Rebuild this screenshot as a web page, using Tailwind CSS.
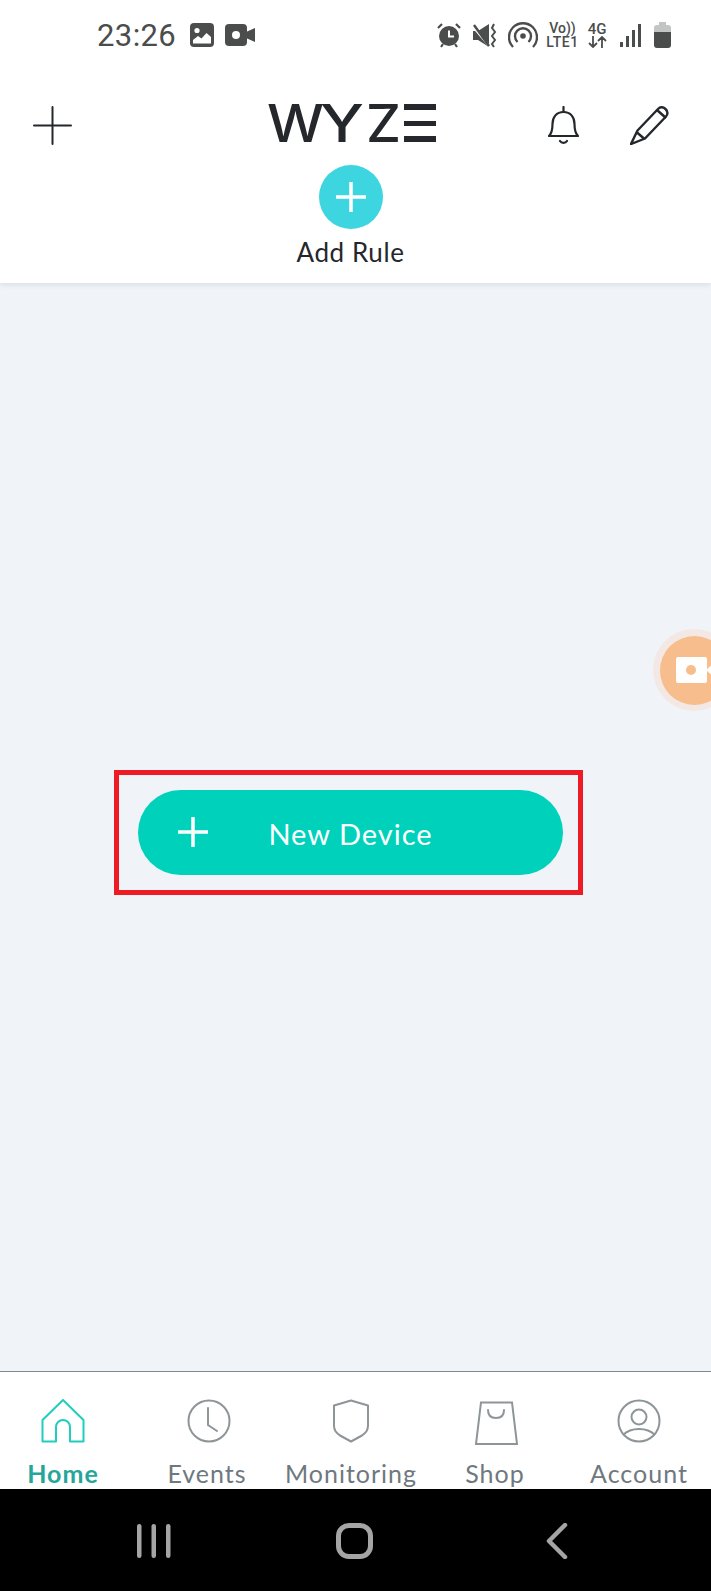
<!DOCTYPE html>
<html lang="en">

<head>
    <meta charset="UTF-8" />
    <meta name="viewport" content="width=device-width, initial-scale=1.0" />
    <title>Wyze - Add New Device</title>
    <script src="https://cdn.jsdelivr.net/npm/@tailwindcss/browser@4"></script>
</head>

<body class="bg-white font-[Lato,sans-serif]">
    <div class="relative flex flex-col w-[711px] h-[1591px] overflow-hidden">
        <!-- header -->
        <header class="relative z-10 h-[283px] shrink-0 bg-white shadow-[0_2px_5px_rgba(120,135,150,0.18)]">
            <!-- status bar -->
            <div class="flex items-center justify-between h-[70px] pl-[97px] pr-[40px] text-[#4b4d4c]">
                <div class="flex items-center">
                    <span class="font-[Roboto,sans-serif] text-[31px] tracking-[0.4px] leading-none mr-[14px]">23:26</span>
                    <svg class="w-[24px] h-[24px] mr-[11px]" viewBox="0 0 24 24">
                        <rect width="24" height="24" rx="4" fill="#4b4d4c" />
                        <circle cx="7" cy="7.500" r="2.600" fill="#fff" />
                        <path d="M3 20.500v-3.500l5-4 3.500 2.500 5-5.500 4.500 4v6.500z" fill="#fff" />
                    </svg>
                    <svg class="w-[30px] h-[22px]" viewBox="0 0 30 22">
                        <rect width="22" height="22" rx="4" fill="#4b4d4c" />
                        <circle cx="11" cy="11" r="4" fill="#fff" />
                        <path d="M21 8l9-4v14l-9-4z" fill="#4b4d4c" />
                    </svg>
                </div>
                <div class="flex items-center">
                    <svg class="w-[24px] h-[25px] mr-[12px]" viewBox="0 0 24 25" fill="#4b4d4c">
                        <circle cx="12" cy="13" r="10" />
                        <path d="M12 7.500v6h5" fill="none" stroke="#fff" stroke-width="2" />
                        <path d="M1 5l4-4M23 5l-4-4M4 24l2-3M20 24l-2-3" stroke="#4b4d4c" stroke-width="2.200" />
                    </svg>
                    <svg class="w-[24px] h-[25px] mr-[11px]" viewBox="0 0 24 25" fill="#4b4d4c">
                        <path d="M0 8h5l11-7v23L5 17H0z" />
                        <path d="M0 4l17 20" stroke="#fff" stroke-width="2" />
                        <path d="M1 2l15 21" stroke="#4b4d4c" stroke-width="2.400" />
                        <path d="M21 1l-2 4 3 4-3 4 3 4-3 4 2 3" fill="none" stroke="#4b4d4c" stroke-width="2" />
                    </svg>
                    <svg class="w-[30px] h-[27px] mr-[9px]" viewBox="0 0 30 27" fill="none" stroke="#4b4d4c" stroke-width="2.400">
                        <path d="M5 25a14 14 0 1 1 20 0" />
                        <path d="M9.500 20a8 8 0 1 1 11 0" />
                        <circle cx="15" cy="14" r="2.800" fill="#4b4d4c" stroke="none" />
                    </svg>
                    <div class="flex flex-col items-center w-[31px] mr-[9px] font-[Roboto,sans-serif] font-medium text-[14px] leading-[14px]">
                        <span>Vo))</span>
                        <span class="tracking-[0.6px]">LTE1</span>
                    </div>
                    <div class="flex flex-col items-center w-[20px] mr-[13px] font-[Roboto,sans-serif] font-medium text-[15px] leading-[13px]">
                        <span>4G</span>
                        <svg class="w-[19px] h-[12px]" viewBox="0 0 19 12" fill="none" stroke="#4b4d4c" stroke-width="1.800">
                            <path d="M5 0v11M1 7l4 4 4-4M14 12V1M10 5l4-4 4 4" />
                        </svg>
                    </div>
                    <svg class="w-[22px] h-[25px] mr-[12px]" viewBox="0 0 22 25" fill="#4b4d4c">
                        <rect x="0" y="19" width="3" height="5" />
                        <rect x="6" y="13" width="3" height="11" />
                        <rect x="12" y="7" width="3" height="17" />
                        <rect x="18" y="1" width="3" height="23" />
                    </svg>
                    <svg class="w-[17px] h-[26px]" viewBox="0 0 17 26">
                        <path d="M0 6a3 3 0 0 1 3-3h2V0h7v3h2a3 3 0 0 1 3 3v6H0z" fill="#c3c5c5" />
                        <path d="M0 10h17v13a3 3 0 0 1-3 3H3a3 3 0 0 1-3-3z" fill="#4b4d4c" />
                    </svg>
                </div>
            </div>

            <!-- toolbar -->
            <div class="flex items-center h-[42px] mt-[34px] pl-[33px] pr-[42px]">
                <svg class="w-[39px] h-[39px]" viewBox="0 0 39 39" fill="none" stroke="#24272b" stroke-width="2" stroke-linecap="round">
                    <path d="M19.500 1v37M1 19.500h37" />
                </svg>
                <svg class="w-[169px] h-[42px] ml-[195px] overflow-visible" viewBox="0 0 169 42" role="img" aria-label="WYZE">
                    <g font-family="Inter" font-weight="500" font-size="52" fill="#24272b">
                        <text x="0" y="38" textLength="57" lengthAdjust="spacingAndGlyphs">W</text>
                        <text x="53" y="38" textLength="44" lengthAdjust="spacingAndGlyphs">Y</text>
                        <text x="99" y="38" textLength="35" lengthAdjust="spacingAndGlyphs">Z</text>
                    </g>
                    <rect x="137" y="0" width="32" height="6" fill="#24272b" />
                    <rect x="137" y="17" width="32" height="5" fill="#24272b" />
                    <rect x="137" y="32" width="32" height="6" fill="#24272b" />
                </svg>
                <div class="flex items-center gap-[51px] ml-auto">
                    <svg class="w-[31px] h-[39px]" viewBox="0 0 31 39" fill="none" stroke="#24272b" stroke-width="2.200" stroke-linecap="round" stroke-linejoin="round">
                        <path d="M1 30h29c-3-3-3.500-6-3.500-12 0-7-4-12-11-12s-11 5-11 12c0 6-.5 9-3.500 12z" />
                        <path d="M15.500 1v4M12 35c1.500 2.500 5.500 2.500 7 0" />
                    </svg>
                    <svg class="w-[39px] h-[39px]" viewBox="0 0 39 39" fill="none" stroke="#24272b" stroke-width="2.400" stroke-linejoin="round">
                        <path d="M7.500 24.500L28 3c2-2 5-2.200 7.500 0s2.500 5.500.5 7.500L15 32.500 1 38z" />
                        <path d="M27 4l9 8M6.500 26l8 7" />
                    </svg>
                </div>
            </div>

            <!-- add rule -->
            <div class="flex flex-col items-center mt-[19px] pr-[10px]">
                <button class="flex items-center justify-center w-[64px] h-[64px] rounded-full bg-[#3dd5e0]">
                    <svg class="w-[30px] h-[30px]" viewBox="0 0 30 30" fill="none" stroke="#fff" stroke-width="3.500">
                        <path d="M15 0v30M0 15h30" />
                    </svg>
                </button>
                <span class="mt-[8px] text-[26px] tracking-[0.6px] leading-[30px] text-[#24272b]">Add Rule</span>
            </div>
        </header>

        <!-- empty device list -->
        <main class="flex-1 flex items-center justify-center bg-[#f0f4f8] pt-[11px] pr-[14px]">
            <div class="border-[5px] border-[#ed1c24] py-[15px] pl-[19px] pr-[15px]">
                <button class="relative flex items-center justify-center w-[425px] h-[85px] pt-[2px] rounded-full bg-[#00d1bb] text-white text-[29px] tracking-[1px]">
                    <svg class="absolute left-[40px] top-[27px] w-[30px] h-[30px]" viewBox="0 0 30 30" fill="none" stroke="#fff" stroke-width="3.500">
                        <path d="M15 0v30M0 15h30" />
                    </svg>
                    New Device
                </button>
            </div>
        </main>

        <!-- floating camera button, cut off by the screen edge -->
        <div class="absolute left-[653px] top-[629px] flex items-center justify-center w-[82px] h-[82px] rounded-full bg-[#f3e8e3]">
            <div class="relative w-[69px] h-[69px] rounded-full bg-[#f8bd8c]">
                <svg class="absolute left-[16px] top-[21px] w-[50px] h-[26px]" viewBox="0 0 50 26">
                    <rect width="31" height="26" rx="2" fill="#fff" />
                    <circle cx="15" cy="13" r="5" fill="#f8bd8c" />
                    <path d="M30 13l12-11v22z" fill="#fff" />
                </svg>
            </div>
        </div>

        <!-- bottom tabs -->
        <nav class="flex justify-between h-[118px] shrink-0 pt-[27px] pl-[23px] pr-[32px] bg-white border-t border-[#7f878c] text-[25px] tracking-[1px] leading-[32px] text-[#6f787e]">
            <a class="flex flex-col items-center w-20 whitespace-nowrap font-bold text-[#26a69a]">
                <svg class="w-[44px] h-[44px]" viewBox="0 0 44 44" fill="none" stroke="#1fcfbb" stroke-width="2" stroke-linejoin="round">
                    <path d="M1.500 21L22 1l20.500 20v21.500H29V28a7 7 0 0 0-14 0v14.500H1.500z" />
                </svg>
                <span class="mt-[14px]">Home</span>
            </a>
            <a class="flex flex-col items-center w-20 whitespace-nowrap">
                <svg class="w-[44px] h-[44px] translate-x-[2px]" viewBox="0 0 44 44" fill="none" stroke="#8d9599" stroke-width="2">
                    <circle cx="22" cy="22" r="20.500" />
                    <path d="M21 9v17l9 6" stroke-linecap="round" />
                </svg>
                <span class="mt-[14px]">Events</span>
            </a>
            <a class="flex flex-col items-center w-20 whitespace-nowrap">
                <svg class="w-[38px] h-[44px]" viewBox="0 0 38 44" fill="none" stroke="#8d9599" stroke-width="2" stroke-linejoin="round">
                    <path d="M19 1.500l17 5v20c0 5-2 7-6 10l-11 6-11-6c-4-3-6-5-6-10v-20z" />
                </svg>
                <span class="mt-[14px]">Monitoring</span>
            </a>
            <a class="flex flex-col items-center w-20 whitespace-nowrap">
                <svg class="w-[44px] h-[44px] translate-x-[2px] translate-y-[2px]" viewBox="0 0 44 44" fill="none" stroke="#8d9599" stroke-width="2">
                    <path d="M6 1.500h31L42 43H1z" />
                    <path d="M13 9c0 5 3 8 8 8s8-3 8-8" stroke-linecap="round" />
                </svg>
                <span class="mt-[14px]">Shop</span>
            </a>
            <a class="flex flex-col items-center w-20 whitespace-nowrap">
                <svg class="w-[44px] h-[44px]" viewBox="0 0 44 44" fill="none" stroke="#8d9599" stroke-width="2">
                    <circle cx="22" cy="22" r="20.500" />
                    <circle cx="22" cy="18" r="7.500" />
                    <path d="M6 36c4-4 10-6 16-6s12 2 16 6" />
                </svg>
                <span class="mt-[14px]">Account</span>
            </a>
        </nav>

        <!-- android navigation bar -->
        <div class="flex items-center h-[102px] shrink-0 bg-black pl-[137px] pt-[2px]">
            <svg class="w-[34px] h-[36px]" viewBox="0 0 34 36" fill="#a5a5a5">
                <rect x="0" y="1" width="4.500" height="34" rx="2.200" />
                <rect x="14.500" y="1" width="4.500" height="34" rx="2.200" />
                <rect x="29" y="1" width="4.500" height="34" rx="2.200" />
            </svg>
            <div class="w-[37px] h-[36px] ml-[165px] rounded-[13px] border-[5px] border-[#a5a5a5]"></div>
            <svg class="w-[22px] h-[36px] ml-[173px]" viewBox="0 0 22 36" fill="none" stroke="#a5a5a5" stroke-width="4.500" stroke-linecap="round" stroke-linejoin="round">
                <path d="M19 2L3 18l16 16" />
            </svg>
        </div>
    </div>
</body>

</html>
